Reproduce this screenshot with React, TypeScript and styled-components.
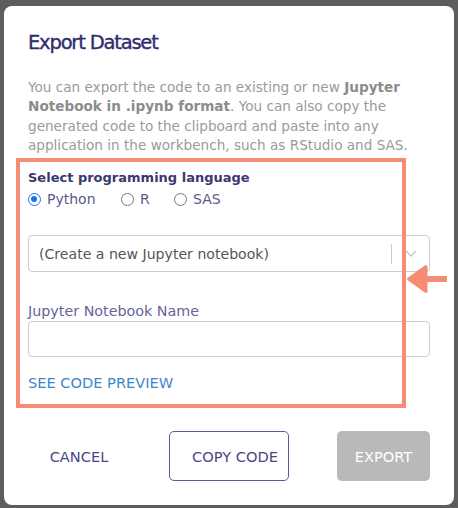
import React from "react";
import styled, { createGlobalStyle } from "styled-components";

const Global = createGlobalStyle`
  html, body { margin: 0; padding: 0; }
  body {
    background: #5d5d5d;
    font-family: "DejaVu Sans", "Liberation Sans", sans-serif;
    width: 458px;
    height: 508px;
    overflow: hidden;
  }
  * { box-sizing: border-box; }
`;

const Page = styled.div`
  width: 458px;
  height: 508px;
  padding: 6px 4px 3px 4px;
`;

const Modal = styled.div`
  position: relative;
  width: 450px;
  height: 499px;
  background: #ffffff;
  border-radius: 8px;
  padding: 25px 24px 24px 24px;
  display: flex;
  flex-direction: column;
`;

const Title = styled.h2`
  margin: 0;
  font-size: 19.5px;
  line-height: 24px;
  font-weight: 500;
  letter-spacing: -1.2px;
  color: #2f2c6d;
  -webkit-text-stroke: 0.35px #2f2c6d;
`;

const Intro = styled.p`
  margin: 23px 0 0 0;
  font-size: 13.6px;
  line-height: 19.3px;
  color: #9a9a9a;
  b { font-weight: 700; color: #8c8c8c; line-height: 19.3px; }
`;

const GroupLabel = styled.div`
  margin-top: 13px;
  font-size: 13px;
  line-height: 20px;
  font-weight: 700;
  color: #3b386d;
`;

const RadioRow = styled.div`
  margin-top: 1px;
  height: 20px;
  display: flex;
  align-items: center;
`;

const RadioOption = styled.label<{ $width: number }>`
  display: flex;
  align-items: center;
  gap: 6px;
  width: ${(p) => p.$width}px;
  font-size: 14px;
  color: #5d5a8e;
`;

const RadioInput = styled.input`
  appearance: none;
  margin: 0;
  width: 13px;
  height: 13px;
  border-radius: 50%;
  border: 1px solid #767676;
  background: #fff;
  position: relative;
  &:checked {
    border: 1.5px solid #1a73e8;
  }
  &:checked::after {
    content: "";
    position: absolute;
    left: 2px;
    top: 2px;
    width: 6px;
    height: 6px;
    border-radius: 50%;
    background: #1a73e8;
  }
`;

const Select = styled.div`
  margin-top: 26px;
  height: 37px;
  border: 1px solid #cccccc;
  border-radius: 4px;
  display: flex;
  align-items: center;
  padding-left: 10px;
`;

const SelectValue = styled.span`
  flex: 1;
  font-size: 14.1px;
  color: #555;
`;

const Divider = styled.span`
  width: 1px;
  height: 20px;
  background: #cccccc;
`;

const Chevron = styled.span`
  width: 37px;
  display: flex;
  align-items: center;
  justify-content: center;
  color: #cccccc;
`;

const FieldLabel = styled.div`
  margin-top: 29px;
  font-size: 14.3px;
  line-height: 20px;
  color: #66649a;
`;

const TextInput = styled.input`
  margin-top: 0;
  height: 36px;
  border: 1px solid #cccccc;
  border-radius: 4px;
  outline: none;
  font-family: inherit;
`;

const PreviewLink = styled.a`
  margin-top: 16px;
  font-size: 14.6px;
  line-height: 20px;
  color: #3f87c8;
  text-decoration: none;
  align-self: flex-start;
`;

const Actions = styled.div`
  margin-top: 38px;
  display: flex;
  align-items: center;
`;

const Button = styled.button<{ $variant: "text" | "outline" | "disabled"; $width: number; $gap: number }>`
  margin-left: ${(p) => p.$gap}px;
  width: ${(p) => p.$width}px;
  height: 50px;
  border-radius: 5px;
  font-family: inherit;
  font-size: 14.6px;
  font-weight: 500;
  display: flex;
  align-items: center;
  justify-content: center;
  padding: 0;
  border: ${(p) => (p.$variant === "outline" ? "1.5px solid #5a58a0" : "none")};
  background: ${(p) => (p.$variant === "disabled" ? "#b9b9b9" : "#fff")};
  color: ${(p) => (p.$variant === "disabled" ? "#ffffff" : "#4a4786")};
  padding-left: ${(p) => (p.$variant === "outline" ? "12px" : "0")};
`;

const Highlight = styled.div`
  position: absolute;
  left: 12px;
  top: 152px;
  width: 390px;
  height: 250px;
  border: 4px solid #f48c76;
  pointer-events: none;
`;

const Arrow = styled.svg`
  position: absolute;
  left: 394px;
  top: 252px;
`;

export default function App() {
  return (
    <>
      <Global />
      <Page>
        <Modal>
          <Title>Export Dataset</Title>
          <Intro>
            You can export the code to an existing or new <b>Jupyter Notebook in .ipynb format</b>. You can also copy the
            generated code to the clipboard and paste into any application in the workbench, such as RStudio and SAS.
          </Intro>
          <GroupLabel>Select programming language</GroupLabel>
          <RadioRow>
            <RadioOption $width={93}>
              <RadioInput type="radio" name="lang" defaultChecked />
              Python
            </RadioOption>
            <RadioOption $width={53}>
              <RadioInput type="radio" name="lang" />
              R
            </RadioOption>
            <RadioOption $width={80}>
              <RadioInput type="radio" name="lang" />
              SAS
            </RadioOption>
          </RadioRow>
          <Select>
            <SelectValue>(Create a new Jupyter notebook)</SelectValue>
            <Divider />
            <Chevron>
              <svg width="12" height="8" viewBox="0 0 12 8" fill="none">
                <polyline points="1.5,1.5 6,6 10.5,1.5" stroke="currentColor" strokeWidth="1.6" strokeLinecap="round" strokeLinejoin="round" />
              </svg>
            </Chevron>
          </Select>
          <FieldLabel>Jupyter Notebook Name</FieldLabel>
          <TextInput type="text" />
          <PreviewLink href="#">SEE CODE PREVIEW</PreviewLink>
          <Actions>
            <Button $variant="text" $width={102} $gap={0}>CANCEL</Button>
            <Button $variant="outline" $width={120} $gap={39}>COPY CODE</Button>
            <Button $variant="disabled" $width={93} $gap={48}>EXPORT</Button>
          </Actions>
          <Highlight />
          <Arrow width="52" height="42" viewBox="0 0 52 42">
            <path d="M28 8.5 L10.5 21 L28 33.5 Z" fill="#f48c76" stroke="#f48c76" strokeWidth="3" strokeLinejoin="round" />
            <rect x="26" y="18" width="23" height="6" fill="#f48c76" />
          </Arrow>
        </Modal>
      </Page>
    </>
  );
}
